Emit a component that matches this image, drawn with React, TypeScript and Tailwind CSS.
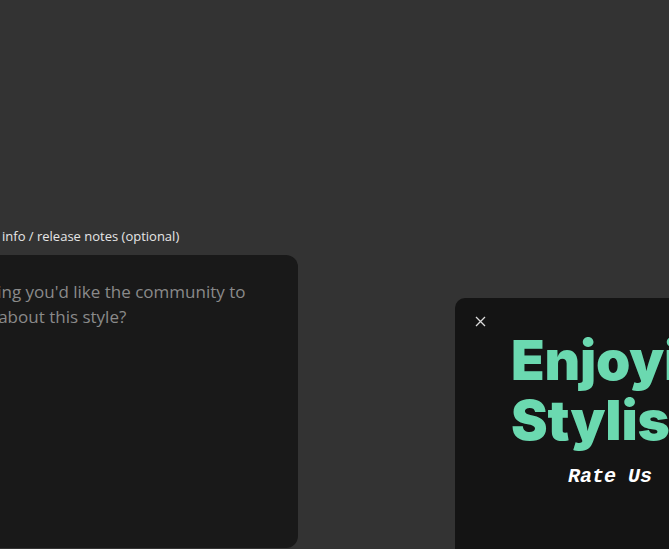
import React from 'react';

function RatePopup() {
  return (
    <div className="fixed left-[455px] top-[298px] w-[310px] h-[300px] rounded-[10px] bg-[#141414]">
      <button className="absolute left-[19px] top-[17px] flex h-[12px] w-[12px] items-center justify-center text-[#dcdcdc]">
        <svg width="11" height="11" viewBox="0 0 11 11" fill="none" stroke="currentColor" strokeWidth="1.3">
          <path d="M1 1l9 9M10 1l-9 9" />
        </svg>
      </button>
      <h2 className="pl-[56px] pt-[32px] font-['Inter'] text-[55px] font-black leading-[60px] tracking-[-0.2px] text-[#6bd9b0] whitespace-nowrap">
        Enjoying
        <br />
        Stylish?
      </h2>
      <p className="mt-[12px] text-center font-['Liberation_Mono',monospace] text-[20px] font-bold italic text-white">
        Rate Us
      </p>
    </div>
  );
}

export default function App() {
  return (
    <div className="relative min-h-[549px] overflow-hidden bg-[#333333] font-['Open_Sans',sans-serif]">
      <div className="ml-[-63px] w-[361px] pt-[227px]">
        <label className="block text-[13px] font-medium leading-[18px] text-[#e6e6e6] whitespace-nowrap">
          Additional info / release notes (optional)
        </label>
        <div className="mt-[10px] h-[293px] rounded-[12px] bg-[#191919] px-[14px] py-[24px]">
          <p className="text-[17px] leading-[25px] text-[#8a8a8a]">
            Anything you'd like the community to
            <br />
            know about this style?
          </p>
        </div>
      </div>
      <RatePopup />
    </div>
  );
}
